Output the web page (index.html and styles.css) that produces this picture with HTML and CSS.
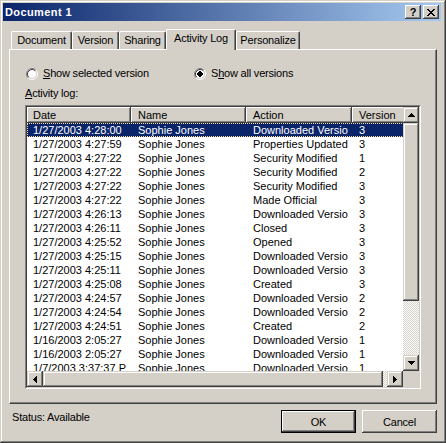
FILE: index.html
```html
<!DOCTYPE html>
<html>
<head>
<meta charset="utf-8">
<title>Document 1</title>
<link rel="stylesheet" href="styles.css">
</head>
<body>
<div class="window">
  <div class="titlebar">
    <span class="title">Document 1</span>
    <div class="tb-buttons">
      <span class="tb-btn help">?</span>
      <span class="tb-btn close"><svg width="8" height="7" viewBox="0 0 8 7"><path d="M0 0h2v1h1v1h2v-1h1v-1h2v1h-1v1h-1v1h-1v1h1v1h1v1h1v1h-2v-1h-1v-1h-2v1h-1v1h-2v-1h1v-1h1v-1h1v-1h-1v-1h-1v-1h-1z" fill="#000"/></svg></span>
    </div>
  </div>
  <div class="body">
    <div class="tabs">
      <div class="tab t-doc">Document</div>
      <div class="tab t-ver">Version</div>
      <div class="tab t-share">Sharing</div>
      <div class="tab t-log active">Activity Log</div>
      <div class="tab t-pers">Personalize</div>
    </div>
    <div class="panel">
      <div class="radios">
        <label class="radio r1">
          <svg width="12" height="12" viewBox="0 0 12 12"><circle cx="6" cy="6" r="4.5" fill="#fff"/><path d="M2.11 9.89A5.5 5.5 0 0 1 9.89 2.11" fill="none" stroke="#808080"/><path d="M9.89 2.11A5.5 5.5 0 0 1 2.11 9.89" fill="none" stroke="#fff"/><path d="M2.82 9.18A4.5 4.5 0 0 1 9.18 2.82" fill="none" stroke="#404040"/><path d="M9.18 2.82A4.5 4.5 0 0 1 2.82 9.18" fill="none" stroke="#d4d0c8"/></svg>
          <span><u>S</u>how selected version</span>
        </label>
        <label class="radio r2">
          <svg width="12" height="12" viewBox="0 0 12 12"><circle cx="6" cy="6" r="4.5" fill="#fff"/><path d="M2.11 9.89A5.5 5.5 0 0 1 9.89 2.11" fill="none" stroke="#808080"/><path d="M9.89 2.11A5.5 5.5 0 0 1 2.11 9.89" fill="none" stroke="#fff"/><path d="M2.82 9.18A4.5 4.5 0 0 1 9.18 2.82" fill="none" stroke="#404040"/><path d="M9.18 2.82A4.5 4.5 0 0 1 2.82 9.18" fill="none" stroke="#d4d0c8"/><rect x="4" y="4" width="4" height="4" fill="#000"/><rect x="5" y="3" width="2" height="6" fill="#000"/><rect x="3" y="5" width="6" height="2" fill="#000"/></svg>
          <span>S<u>h</u>ow all versions</span>
        </label>
      </div>
      <div class="lbl"><u>A</u>ctivity log:</div>
      <div class="lv">
        <div class="lv-inner">
          <div class="lv-main">
            <div class="lv-head">
              <div class="hc h-date">Date</div>
              <div class="hc h-name">Name</div>
              <div class="hc h-action">Action</div>
              <div class="hc h-ver">Version</div>
            </div>
            <div class="row sel"><div class="cell c-date">1/27/2003 4:28:00</div><div class="cell c-name">Sophie Jones</div><div class="cell c-action">Downloaded Version</div><div class="cell c-ver">3</div></div>
            <div class="row"><div class="cell c-date">1/27/2003 4:27:59</div><div class="cell c-name">Sophie Jones</div><div class="cell c-action">Properties Updated</div><div class="cell c-ver">3</div></div>
            <div class="row"><div class="cell c-date">1/27/2003 4:27:22</div><div class="cell c-name">Sophie Jones</div><div class="cell c-action">Security Modified</div><div class="cell c-ver">1</div></div>
            <div class="row"><div class="cell c-date">1/27/2003 4:27:22</div><div class="cell c-name">Sophie Jones</div><div class="cell c-action">Security Modified</div><div class="cell c-ver">2</div></div>
            <div class="row"><div class="cell c-date">1/27/2003 4:27:22</div><div class="cell c-name">Sophie Jones</div><div class="cell c-action">Security Modified</div><div class="cell c-ver">3</div></div>
            <div class="row"><div class="cell c-date">1/27/2003 4:27:22</div><div class="cell c-name">Sophie Jones</div><div class="cell c-action">Made Official</div><div class="cell c-ver">3</div></div>
            <div class="row"><div class="cell c-date">1/27/2003 4:26:13</div><div class="cell c-name">Sophie Jones</div><div class="cell c-action">Downloaded Version</div><div class="cell c-ver">3</div></div>
            <div class="row"><div class="cell c-date">1/27/2003 4:26:11</div><div class="cell c-name">Sophie Jones</div><div class="cell c-action">Closed</div><div class="cell c-ver">3</div></div>
            <div class="row"><div class="cell c-date">1/27/2003 4:25:52</div><div class="cell c-name">Sophie Jones</div><div class="cell c-action">Opened</div><div class="cell c-ver">3</div></div>
            <div class="row"><div class="cell c-date">1/27/2003 4:25:15</div><div class="cell c-name">Sophie Jones</div><div class="cell c-action">Downloaded Version</div><div class="cell c-ver">3</div></div>
            <div class="row"><div class="cell c-date">1/27/2003 4:25:11</div><div class="cell c-name">Sophie Jones</div><div class="cell c-action">Downloaded Version</div><div class="cell c-ver">3</div></div>
            <div class="row"><div class="cell c-date">1/27/2003 4:25:08</div><div class="cell c-name">Sophie Jones</div><div class="cell c-action">Created</div><div class="cell c-ver">3</div></div>
            <div class="row"><div class="cell c-date">1/27/2003 4:24:57</div><div class="cell c-name">Sophie Jones</div><div class="cell c-action">Downloaded Version</div><div class="cell c-ver">2</div></div>
            <div class="row"><div class="cell c-date">1/27/2003 4:24:54</div><div class="cell c-name">Sophie Jones</div><div class="cell c-action">Downloaded Version</div><div class="cell c-ver">2</div></div>
            <div class="row"><div class="cell c-date">1/27/2003 4:24:51</div><div class="cell c-name">Sophie Jones</div><div class="cell c-action">Created</div><div class="cell c-ver">2</div></div>
            <div class="row"><div class="cell c-date">1/16/2003 2:05:27</div><div class="cell c-name">Sophie Jones</div><div class="cell c-action">Downloaded Version</div><div class="cell c-ver">1</div></div>
            <div class="row"><div class="cell c-date">1/16/2003 2:05:27</div><div class="cell c-name">Sophie Jones</div><div class="cell c-action">Downloaded Version</div><div class="cell c-ver">1</div></div>
            <div class="row"><div class="cell c-date">1/7/2003 3:37:37 PM</div><div class="cell c-name">Sophie Jones</div><div class="cell c-action">Downloaded Version</div><div class="cell c-ver">1</div></div>
          </div>
          <div class="vscroll">
            <div class="sb-btn"><svg width="7" height="4" viewBox="0 0 7 4"><path d="M3 0h1v1h1v1h1v1h1v1H0v-1h1v-1h1v-1h1z"/></svg></div>
            <div class="vthumb"></div>
            <div class="track"></div>
            <div class="sb-btn"><svg width="7" height="4" viewBox="0 0 7 4"><path d="M0 0h7v1h-1v1h-1v1h-1v1h-1v-1h-1v-1h-1v-1H0z"/></svg></div>
          </div>
          <div class="hscroll">
            <div class="sb-btn"><svg width="4" height="7" viewBox="0 0 4 7"><path d="M3 0h1v7h-1v-1h-1v-1h-1v-1H0v-1h1v-1h1v-1h1z"/></svg></div>
            <div class="hthumb"></div>
            <div class="track"></div>
            <div class="sb-btn"><svg width="4" height="7" viewBox="0 0 4 7"><path d="M0 0h1v1h1v1h1v1h1v1h-1v1h-1v1h-1v1H0z"/></svg></div>
          </div>
          <div class="corner"></div>
        </div>
      </div>
    </div>
    <div class="footer">
      <div class="status">Status: Available</div>
      <div class="buttons">
        <button class="btn default">OK</button>
        <button class="btn">Cancel</button>
      </div>
    </div>
  </div>
</div>
</body>
</html>
```

FILE: styles.css
```css
* { box-sizing: border-box; }
html, body { margin: 0; padding: 0; }
body {
  width: 446px;
  height: 443px;
  overflow: hidden;
  background: #d4d0c8;
  font-family: "Liberation Sans", Arial, sans-serif;
  font-size: 11px;
  letter-spacing: -0.2px;
  color: #000;
}
.window {
  width: 446px;
  height: 443px;
  padding: 3px 5px 3px 3px;
  background: #d4d0c8;
  box-shadow: inset -1px -1px #404040, inset 1px 1px #d4d0c8, inset -2px -2px #808080, inset 2px 2px #fff;
}
.titlebar {
  height: 18px;
  display: flex;
  align-items: center;
  justify-content: space-between;
  padding: 0 2px;
  background: linear-gradient(to right, #0a246a, #a6caf0);
}
.title {
  color: #fff;
  font-weight: bold;
  letter-spacing: 0.4px;
}
.tb-buttons { display: flex; gap: 2px; }
.tb-btn {
  width: 16px;
  height: 14px;
  background: #d4d0c8;
  box-shadow: inset -1px -1px #404040, inset 1px 1px #fff, inset -2px -2px #808080;
  display: flex;
  align-items: center;
  justify-content: center;
}
.help {
  font-weight: bold;
  font-size: 11px;
  letter-spacing: 0;
  line-height: 14px;
  padding-bottom: 1px;
}
.close svg { display: block; }
.body { padding: 8px 4px 0 6px; }
.tabs {
  display: flex;
  align-items: flex-end;
  height: 20px;
  padding-left: 2px;
}
.tab {
  height: 18px;
  background: #d4d0c8;
  border-top: 1px solid #fff;
  border-left: 1px solid #fff;
  border-right: 1px solid #404040;
  border-radius: 2px 2px 0 0;
  box-shadow: inset -1px 0 #808080;
  text-align: center;
  line-height: 17px;
}
.tab.active {
  height: 21px;
  margin-bottom: -1px;
  position: relative;
  z-index: 1;
}
.t-doc { width: 61px; }
.t-ver { width: 47px; }
.t-share { width: 47px; }
.t-log { width: 70px; }
.t-pers { width: 64px; }
.panel {
  width: 428px;
  height: 355px;
  border-top: 1px solid #fff;
  border-left: 1px solid #fff;
  border-right: 1px solid #404040;
  border-bottom: 1px solid #404040;
  box-shadow: inset -1px -1px #808080;
  padding: 17px 0 0 15px;
}
.radios {
  display: flex;
  align-items: center;
  height: 13px;
}
.radio {
  display: flex;
  align-items: center;
  gap: 5px;
  line-height: 13px;
}
.radio svg { display: block; flex: none; }
.r1 { margin-left: 1px; width: 168px; }
.lbl {
  margin-top: 7px;
  height: 13px;
  line-height: 13px;
}
.lv {
  margin-top: 5px;
  width: 396px;
  height: 284px;
  border: 1px solid;
  border-color: #808080 #fff #fff #808080;
}
.lv-inner {
  width: 100%;
  height: 100%;
  border: 1px solid;
  border-color: #404040 #d4d0c8 #d4d0c8 #404040;
  display: grid;
  grid-template-columns: 376px 16px;
  grid-template-rows: 264px 16px;
  background: #fff;
}
.lv-main {
  overflow: hidden;
  background: #fff;
  letter-spacing: 0;
}
.lv-head {
  display: flex;
  height: 16px;
  width: 405px;
}
.hc {
  flex: none;
  height: 16px;
  line-height: 16px;
  padding-left: 7px;
  background: #d4d0c8;
  box-shadow: inset -1px -1px #404040, inset 1px 1px #fff, inset -2px -2px #808080;
  white-space: nowrap;
  overflow: hidden;
}
.h-date { width: 104px; padding-left: 6px; }
.h-name { width: 115px; }
.h-action { width: 106px; }
.h-ver { width: 80px; }
.row {
  display: flex;
  width: 405px;
  height: 14px;
  line-height: 14px;
}
.cell {
  flex: none;
  overflow: hidden;
  white-space: nowrap;
  padding-left: 7px;
}
.c-date { width: 99px; margin-right: 5px; padding-left: 6px; }
.c-name { width: 111px; margin-right: 4px; }
.c-action { width: 102px; margin-right: 4px; }
.c-ver { width: 76px; margin-right: 4px; }
.row.sel {
  background: #0a246a;
  color: #fff;
  outline: 1px dotted #f5db95;
  outline-offset: -1px;
}
.vscroll {
  display: flex;
  flex-direction: column;
}
.hscroll {
  display: flex;
}
.sb-btn {
  width: 16px;
  height: 16px;
  flex: none;
  background: #d4d0c8;
  box-shadow: inset -1px -1px #404040, inset 1px 1px #d4d0c8, inset -2px -2px #808080, inset 2px 2px #fff;
  display: flex;
  align-items: center;
  justify-content: center;
}
.sb-btn svg { display: block; fill: #000; }
.vthumb, .hthumb {
  flex: none;
  background: #d4d0c8;
  box-shadow: inset -1px -1px #404040, inset 1px 1px #d4d0c8, inset -2px -2px #808080, inset 2px 2px #fff;
}
.vthumb { height: 178px; width: 16px; }
.hthumb { width: 340px; height: 16px; }
.track {
  flex: 1;
  background-image: conic-gradient(#fff 25%, #d4d0c8 0 50%, #fff 0 75%, #d4d0c8 0);
  background-size: 2px 2px;
}
.corner { background: #d4d0c8; }
.footer {
  display: flex;
  justify-content: space-between;
  margin-top: 6px;
  padding-left: 3px;
}
.status {
  padding-top: 1px;
  line-height: 13px;
}
.buttons { display: flex; gap: 6px; }
.btn {
  width: 75px;
  height: 23px;
  padding: 0;
  border: none;
  font-family: inherit;
  font-size: 11px;
  letter-spacing: -0.2px;
  color: #000;
  background: #d4d0c8;
  box-shadow: inset -1px -1px #404040, inset 1px 1px #fff, inset -2px -2px #808080, inset 2px 2px #d4d0c8;
}
.btn.default {
  box-shadow: inset 0 0 0 1px #000, inset -2px -2px #404040, inset 2px 2px #fff, inset -3px -3px #808080;
}
```
